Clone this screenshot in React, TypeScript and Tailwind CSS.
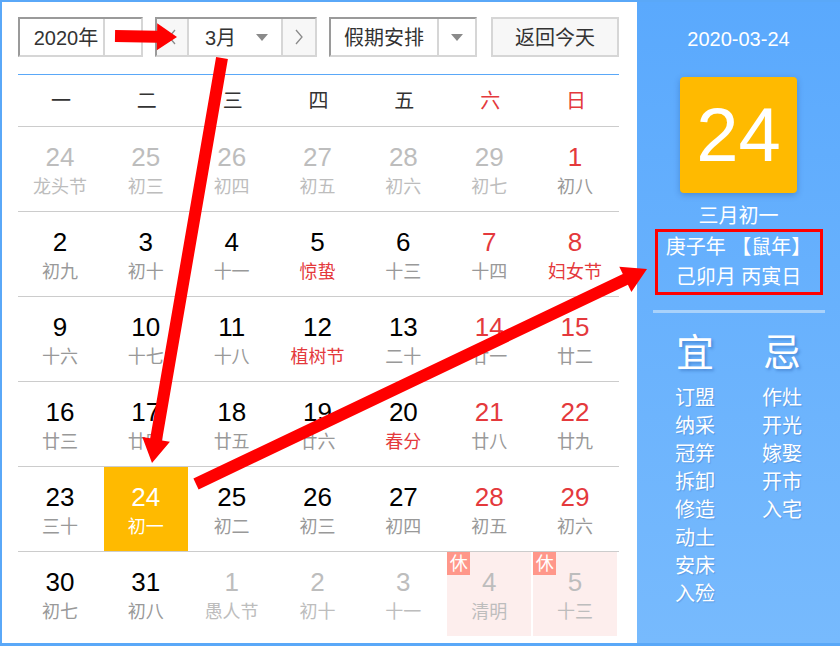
import React from "react";

type Day = {
  d: number;
  l: string;
  faded?: boolean;
  red?: boolean;
  lred?: boolean;
  today?: boolean;
  rest?: boolean;
};

const weeks: Day[][] = [
  [
    { d: 24, l: "龙头节", faded: true },
    { d: 25, l: "初三", faded: true },
    { d: 26, l: "初四", faded: true },
    { d: 27, l: "初五", faded: true },
    { d: 28, l: "初六", faded: true },
    { d: 29, l: "初七", faded: true },
    { d: 1, l: "初八", red: true },
  ],
  [
    { d: 2, l: "初九" },
    { d: 3, l: "初十" },
    { d: 4, l: "十一" },
    { d: 5, l: "惊蛰", lred: true },
    { d: 6, l: "十三" },
    { d: 7, l: "十四", red: true },
    { d: 8, l: "妇女节", red: true, lred: true },
  ],
  [
    { d: 9, l: "十六" },
    { d: 10, l: "十七" },
    { d: 11, l: "十八" },
    { d: 12, l: "植树节", lred: true },
    { d: 13, l: "二十" },
    { d: 14, l: "廿一", red: true },
    { d: 15, l: "廿二", red: true },
  ],
  [
    { d: 16, l: "廿三" },
    { d: 17, l: "廿四" },
    { d: 18, l: "廿五" },
    { d: 19, l: "廿六" },
    { d: 20, l: "春分", lred: true },
    { d: 21, l: "廿八", red: true },
    { d: 22, l: "廿九", red: true },
  ],
  [
    { d: 23, l: "三十" },
    { d: 24, l: "初一", today: true },
    { d: 25, l: "初二" },
    { d: 26, l: "初三" },
    { d: 27, l: "初四" },
    { d: 28, l: "初五", red: true },
    { d: 29, l: "初六", red: true },
  ],
  [
    { d: 30, l: "初七" },
    { d: 31, l: "初八" },
    { d: 1, l: "愚人节", faded: true },
    { d: 2, l: "初十", faded: true },
    { d: 3, l: "十一", faded: true },
    { d: 4, l: "清明", faded: true, rest: true },
    { d: 5, l: "十三", faded: true, rest: true },
  ],
];

const weekdays = ["一", "二", "三", "四", "五", "六", "日"];
const yi = ["订盟", "纳采", "冠笄", "拆卸", "修造", "动土", "安床", "入殓"];
const ji = ["作灶", "开光", "嫁娶", "开市", "入宅"];

const font = "font-['Liberation_Sans','Noto_Sans_CJK_SC',sans-serif]";

function Caret() {
  return (
    <svg width="12" height="7" viewBox="0 0 12 7">
      <path d="M0 0h12L6 7z" fill="#8a8a8a" />
    </svg>
  );
}

function Chevron({ dir }: { dir: "l" | "r" }) {
  return (
    <svg width="10" height="16" viewBox="0 0 10 16">
      <polyline
        points={dir === "l" ? "8,1 2,8 8,15" : "2,1 8,8 2,15"}
        fill="none"
        stroke="#8a8a8a"
        strokeWidth="1.3"
      />
    </svg>
  );
}

function arrow(x1: number, y1: number, x2: number, y2: number, w: number, L: number, H: number) {
  const dx = x2 - x1;
  const dy = y2 - y1;
  const len = Math.hypot(dx, dy);
  const ux = dx / len;
  const uy = dy / len;
  const px = -uy;
  const py = ux;
  const bx = x2 - ux * L;
  const by = y2 - uy * L;
  const pts = [
    [x1 + (px * w) / 2, y1 + (py * w) / 2],
    [bx + (px * w) / 2, by + (py * w) / 2],
    [bx + (px * H) / 2, by + (py * H) / 2],
    [x2, y2],
    [bx - (px * H) / 2, by - (py * H) / 2],
    [bx - (px * w) / 2, by - (py * w) / 2],
    [x1 - (px * w) / 2, y1 - (py * w) / 2],
  ];
  return pts.map((p) => p.map((n) => n.toFixed(1)).join(",")).join(" ");
}

function Cell({ day }: { day: Day }) {
  const bg = day.today ? "bg-[#ffba00]" : day.rest ? "bg-[#fdeeed]" : "";
  const num = day.today
    ? "text-white"
    : day.faded
    ? "text-[#bdbdbd]"
    : day.red
    ? "text-[#e4393c]"
    : "text-black";
  const lunar = day.today
    ? "text-white"
    : day.faded
    ? "text-[#bdbdbd]"
    : day.lred
    ? "text-[#e4393c]"
    : "text-[#999]";
  return (
    <div className={`relative mr-[2px] flex flex-col items-center pt-[15px] ${bg}`}>
      {day.rest && (
        <span className="absolute left-0 top-0 flex h-[23px] w-[23px] items-center justify-center bg-[#ff978a] text-[18px] leading-none text-white">
          休
        </span>
      )}
      <span className={`text-[26px] leading-[30px] ${num}`}>{day.d}</span>
      <span className={`mt-[3px] text-[18px] leading-[24px] ${lunar}`}>{day.l}</span>
    </div>
  );
}

export default function App() {
  return (
    <div className={`relative h-[646px] w-[840px] overflow-hidden ${font}`}>
      <div className="flex h-full w-full border-b-[3px] border-l-2 border-t-2 border-[#5aa8f8] bg-white">
        {/* 달력 본문 */}
        <div className="flex w-[635px] flex-col pl-[16px] pr-[18px] pt-[15px]">
          <div className="flex h-[40px] text-[20px] text-[#333]">
            <div className="flex w-[125px] border-2 border-b-[#d6d6d6] border-l-[#9a9a9a] border-r-[#d6d6d6] border-t-[#9a9a9a]">
              <div className="flex w-[85px] items-center justify-center border-r-2 border-[#d6d6d6] pl-[9px] pt-[1px]">
                2020年
              </div>
              <div className="flex flex-1 items-center justify-center">
                <Caret />
              </div>
            </div>
            <div className="ml-[12px] flex w-[162px] border-2 border-b-[#d6d6d6] border-l-[#9a9a9a] border-r-[#d6d6d6] border-t-[#9a9a9a]">
              <div className="flex w-[32px] items-center justify-center border-r-2 border-[#d6d6d6] bg-[#f7f7f7]">
                <Chevron dir="l" />
              </div>
              <div className="flex w-[94px] items-center border-r-2 border-[#d6d6d6] pl-[16px] pt-[1px]">
                <span>3月</span>
                <span className="ml-auto mr-[13px] flex">
                  <Caret />
                </span>
              </div>
              <div className="flex flex-1 items-center justify-center bg-[#f7f7f7]">
                <Chevron dir="r" />
              </div>
            </div>
            <div className="ml-[12px] flex w-[148px] border-2 border-b-[#d6d6d6] border-l-[#9a9a9a] border-r-[#d6d6d6] border-t-[#9a9a9a]">
              <div className="flex w-[108px] items-center justify-center border-r-2 border-[#d6d6d6] pt-[1px]">
                假期安排
              </div>
              <div className="flex flex-1 items-center justify-center">
                <Caret />
              </div>
            </div>
            <div className="ml-[14px] flex flex-1 items-center justify-center border-2 border-[#d6d6d6] bg-[#f7f7f7] pt-[1px]">
              返回今天
            </div>
          </div>

          <div className="mt-[17px] grid h-[52px] grid-cols-7 border-t border-[#5aa8f8]">
            {weekdays.map((w, i) => (
              <div
                key={w}
                className={`flex items-center justify-center text-[20px] ${i > 4 ? "text-[#e4393c]" : "text-[#333]"}`}
              >
                {w}
              </div>
            ))}
          </div>

          {weeks.map((week, r) => (
            <div key={r} className="grid h-[85px] grid-cols-7 border-t border-[#cccccc]">
              {week.map((day, c) => (
                <Cell key={c} day={day} />
              ))}
            </div>
          ))}
        </div>

        {/* 오른쪽 상세 패널 */}
        <div className="flex flex-1 flex-col items-center bg-linear-to-b from-[#5aa9fd] to-[#77bafd] pt-[23px] text-white">
          <div className="text-[20px] leading-[28px]">2020-03-24</div>
          <div className="mt-[24px] flex h-[116px] w-[117px] items-center justify-center rounded-[4px] bg-[#ffba00] text-[76px] leading-none shadow-[0_2px_6px_rgba(0,40,100,0.25)]">
            24
          </div>
          <div className="mt-[10px] text-[20px] leading-[26px]">三月初一</div>
          <div className="flex h-[66px] w-[168px] flex-col items-center justify-center border-[3px] border-[#ff0000] text-[20px] leading-[30px]">
            <span className="whitespace-pre">庚子年 【鼠年】</span>
            <span className="whitespace-pre">己卯月 丙寅日</span>
          </div>
          <div className="mt-[15px] h-[3px] w-[172px] bg-[#a9d2fb]" />
          <div className="mt-[17px] flex gap-[43px]">
            {[
              { t: "宜", items: yi },
              { t: "忌", items: ji },
            ].map((col) => (
              <div key={col.t} className="flex w-[44px] flex-col items-center">
                <span className="text-[38px] leading-[46px] [text-shadow:2px_2px_3px_rgba(20,70,150,0.35)]">
                  {col.t}
                </span>
                <div className="mt-[8px] flex flex-col items-center">
                  {col.items.map((it) => (
                    <span
                      key={it}
                      className="text-[20px] leading-[28px] [text-shadow:1px_1px_1px_rgba(20,70,150,0.25)]"
                    >
                      {it}
                    </span>
                  ))}
                </div>
              </div>
            ))}
          </div>
        </div>
      </div>

      <svg className="pointer-events-none absolute left-0 top-0" width="840" height="646">
        <polygon points={arrow(115, 36, 177, 37, 12, 20, 27)} fill="#ff0000" />
        <polygon points={arrow(222, 58, 152, 463, 12, 24, 28)} fill="#ff0000" />
        <polygon points={arrow(196, 484, 647, 269, 12, 24, 28)} fill="#ff0000" />
      </svg>
    </div>
  );
}
